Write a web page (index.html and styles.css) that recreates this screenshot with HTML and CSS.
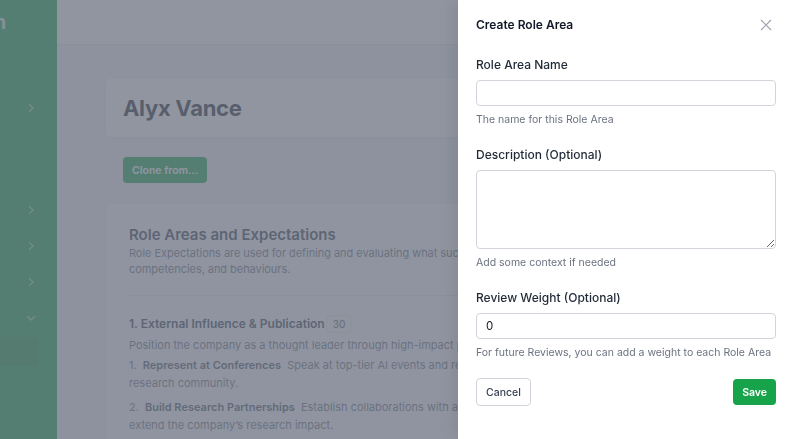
FILE: index.html
```html
<!DOCTYPE html>
<html lang="en">
<head>
    <meta charset="UTF-8">
    <meta name="viewport" content="width=device-width, initial-scale=1.0">
    <title>Create Role Area</title>
    <link rel="stylesheet" href="styles.css">
</head>
<body>
    <div class="app">
        <aside class="sidebar">
            <div class="brand"><span>Plan</span></div>
            <nav class="nav">
                <div class="nav-item first"><svg viewBox="0 0 10 10"><path d="M3.5 1.5 7 5 3.5 8.5"/></svg></div>
                <div class="nav-item spaced"><svg viewBox="0 0 10 10"><path d="M3.5 1.5 7 5 3.5 8.5"/></svg></div>
                <div class="nav-item"><svg viewBox="0 0 10 10"><path d="M3.5 1.5 7 5 3.5 8.5"/></svg></div>
                <div class="nav-item"><svg viewBox="0 0 10 10"><path d="M3.5 1.5 7 5 3.5 8.5"/></svg></div>
                <div class="nav-item"><svg viewBox="0 0 10 10"><path d="M1.5 3.5 5 7 8.5 3.5"/></svg></div>
                <div class="nav-sub active"></div>
            </nav>
        </aside>

        <main class="main">
            <header class="topbar"></header>
            <div class="content">
                <div class="card profile-card">
                    <h1 class="profile-name">Alyx Vance</h1>
                </div>

                <button class="btn-clone">Clone from...</button>

                <div class="card roles-card">
                    <h2 class="roles-title">Role Areas and Expectations</h2>
                    <p class="roles-desc">Role Expectations are used for defining and evaluating what success looks like in this role: skills,<br>competencies, and behaviours.</p>

                    <div class="role-area">
                        <h3 class="area-title">1. External Influence &amp; Publication <span class="badge">30</span></h3>
                        <p class="area-desc">Position the company as a thought leader through high-impact publications and talks.</p>
                        <ol class="expectations">
                            <li><span class="num">1.</span> <strong>Represent at Conferences</strong> Speak at top-tier AI events and represent the company in the<br>research community.</li>
                            <li><span class="num">2.</span> <strong>Build Research Partnerships</strong> Establish collaborations with academic labs to<br>extend the company’s research impact.</li>
                        </ol>
                    </div>
                </div>
            </div>
        </main>
    </div>

    <div class="overlay"></div>

    <aside class="drawer">
        <div class="drawer-header">
            <h2 class="drawer-title">Create Role Area</h2>
            <button class="drawer-close" aria-label="Close">
                <svg viewBox="0 0 12 12"><path d="M1 1l10 10M11 1 1 11"/></svg>
            </button>
        </div>

        <div class="field">
            <label for="name">Role Area Name</label>
            <input type="text" id="name">
            <div class="hint">The name for this Role Area</div>
        </div>

        <div class="field">
            <label for="description">Description (Optional)</label>
            <textarea id="description"></textarea>
            <div class="hint">Add some context if needed</div>
        </div>

        <div class="field">
            <label for="weight">Review Weight (Optional)</label>
            <input type="text" id="weight" value="0">
            <div class="hint">For future Reviews, you can add a weight to each Role Area</div>
        </div>

        <div class="drawer-actions">
            <button class="btn btn-cancel">Cancel</button>
            <button class="btn btn-save">Save</button>
        </div>
    </aside>
</body>
</html>
```

FILE: styles.css
```css
* {
    margin: 0;
    padding: 0;
    box-sizing: border-box;
}

body {
    font-family: Inter, "Noto Sans", sans-serif;
    background: #f3f4f6;
    color: #1f2937;
    width: 791px;
    height: 439px;
    overflow: hidden;
}

.app {
    display: flex;
    height: 439px;
    overflow: hidden;
}

/* Sidebar */
.sidebar {
    width: 57px;
    flex-shrink: 0;
    background: #16a34a;
    overflow: hidden;
}

.brand {
    height: 44px;
    display: flex;
    justify-content: flex-end;
    align-items: center;
    width: 6px;
    overflow: hidden;
    font-size: 19px;
    font-weight: 700;
    color: #ffffff;
    opacity: 0.8;
}

.nav {
    display: flex;
    flex-direction: column;
}

.nav-item {
    height: 36px;
    display: flex;
    align-items: center;
    padding-left: 26px;
}

.nav-item.first {
    margin-top: 46px;
}

.nav-item.spaced {
    margin-top: 66px;
}

.nav-item svg {
    width: 10px;
    height: 10px;
    fill: none;
    stroke: rgba(255, 255, 255, 0.55);
    stroke-width: 1.3;
    stroke-linecap: round;
    stroke-linejoin: round;
}

.nav-sub {
    height: 29px;
    width: 39px;
    margin-top: 1px;
    border-radius: 0 4px 4px 0;
}

.nav-sub.active {
    background: rgba(0, 0, 0, 0.07);
}

/* Main */
.main {
    flex: 1;
    display: flex;
    flex-direction: column;
    overflow: hidden;
}

.topbar {
    height: 45px;
    background: #ffffff;
    border-bottom: 1px solid #e5e7eb;
    flex-shrink: 0;
}

.content {
    padding: 32px 48px 0 48px;
}

.card {
    background: #ffffff;
    border-radius: 6px;
    box-shadow: 0 1px 3px rgba(0, 0, 0, 0.06);
    border: 1px solid #eef0f2;
}

.profile-card {
    padding: 15px 17px;
    height: 61px;
}

.profile-name {
    font-size: 22px;
    font-weight: 700;
    line-height: 30px;
    color: #1f2937;
    letter-spacing: -0.3px;
}

.btn-clone {
    display: block;
    margin: 19px 0 20px 18px;
    height: 26px;
    padding: 0 9px;
    border: none;
    border-radius: 4px;
    background: #16a34a;
    color: #ffffff;
    font-family: inherit;
    font-size: 10.5px;
    font-weight: 600;
}

.roles-card {
    padding: 21px 23px 40px;
    background: #fcfcfd;
}

.roles-title {
    font-size: 15px;
    font-weight: 600;
    line-height: 20px;
    color: #374151;
}

.roles-desc {
    font-size: 11px;
    line-height: 16px;
    color: #6b7280;
    padding-bottom: 18px;
    border-bottom: 1px solid #e5e7eb;
    letter-spacing: -0.05px;
}

.role-area {
    padding-top: 19px;
}

.area-title {
    font-size: 12px;
    font-weight: 600;
    line-height: 18px;
    color: #374151;
    display: flex;
    align-items: center;
    gap: 1px;
}

.badge {
    font-size: 10px;
    font-weight: 500;
    color: #6b7280;
    background: #f9fafb;
    border: 1px solid #e9ebee;
    border-radius: 4px;
    padding: 1px 6px;
    line-height: 14px;
}

.area-desc {
    font-size: 11px;
    line-height: 16px;
    color: #6b7280;
    margin-top: 4px;
}

.expectations {
    list-style: none;
    font-size: 11px;
    line-height: 18px;
    color: #6b7280;
    margin-top: 3px;
}

.expectations li {
    margin-bottom: 6px;
}

.num {
    margin-right: 3px;
}

.expectations strong {
    font-weight: 600;
    color: #4b5563;
    margin-right: 3px;
}

/* Overlay + drawer */
.overlay {
    position: fixed;
    inset: 0;
    background: rgba(107, 114, 128, 0.75);
}

.drawer {
    position: fixed;
    top: 0;
    right: 0;
    bottom: 0;
    width: 333px;
    background: #ffffff;
    box-shadow: -6px 0 14px rgba(0, 0, 0, 0.08);
    padding: 17px 16px 0 18px;
}

.drawer-header {
    display: flex;
    justify-content: space-between;
    align-items: center;
    margin-bottom: 24px;
}

.drawer-title {
    font-size: 12px;
    font-weight: 600;
    line-height: 16px;
    color: #111827;
}

.drawer-close {
    border: none;
    background: transparent;
    width: 12px;
    height: 12px;
    margin-right: 3px;
    display: flex;
}

.drawer-close svg {
    width: 12px;
    height: 12px;
    fill: none;
    stroke: #9ca3af;
    stroke-width: 1.2;
}

.field {
    display: flex;
    flex-direction: column;
    margin-bottom: 20px;
}

.field label {
    font-size: 12px;
    font-weight: 500;
    line-height: 16px;
    color: #1f2937;
    margin-bottom: 7px;
}

.field input,
.field textarea {
    width: 300px;
    height: 26px;
    border: 1px solid #d1d5db;
    border-radius: 4px;
    padding: 0 9px;
    font-family: inherit;
    font-size: 11.5px;
    color: #111827;
    background: #ffffff;
}

.field textarea {
    height: 79px;
    resize: vertical;
}

.hint {
    font-size: 10.5px;
    line-height: 14px;
    color: #6b7280;
    margin-top: 7px;
}

.drawer-actions {
    display: flex;
    justify-content: space-between;
    align-items: flex-start;
    width: 300px;
    margin-top: -2px;
}

.btn {
    height: 28px;
    border-radius: 4px;
    font-family: inherit;
    font-size: 10.5px;
    cursor: pointer;
}

.btn-cancel {
    padding: 0 9px;
    background: #ffffff;
    border: 1px solid #d1d5db;
    color: #374151;
    font-weight: 500;
}

.btn-save {
    height: 26px;
    padding: 0 9px;
    margin-top: 1px;
    background: #16a34a;
    border: none;
    color: #ffffff;
    font-weight: 600;
}
```
